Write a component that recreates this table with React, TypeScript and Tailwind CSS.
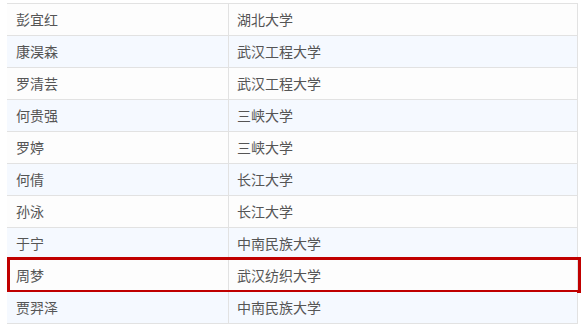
const rows: [string, string][] = [
  ['彭宜红', '湖北大学'],
  ['康淏森', '武汉工程大学'],
  ['罗清芸', '武汉工程大学'],
  ['何贵强', '三峡大学'],
  ['罗婷', '三峡大学'],
  ['何倩', '长江大学'],
  ['孙泳', '长江大学'],
  ['于宁', '中南民族大学'],
  ['周梦', '武汉纺织大学'],
  ['贾羿泽', '中南民族大学'],
]

// the row that gets the red frame
const marked = 8

export default function App() {
  return (
    <div className="h-[329px] w-[586px] overflow-hidden bg-white pl-[7px] pt-[3px] font-['Noto_Sans_CJK_SC',sans-serif] text-[14px] text-[#555]">
      <div className="w-[571px] border-r border-t border-[#e2e2e2]">
        {rows.map(([name, school], i) => (
          <div
            key={name}
            className={
              'relative grid h-[32px] grid-cols-[222px_1fr] border-b border-[#e2e2e2] ' +
              (i % 2 === 0 ? 'bg-[#fdfdfd]' : 'bg-[#f5f9ff]')
            }
          >
            <div className="flex items-center border-r border-[#e2e2e2] pl-[9px]">{name}</div>
            <div className="flex items-center pl-[8px]">{school}</div>
            {i === marked ? (
              <div className="pointer-events-none absolute -bottom-[2px] left-0 -right-[4px] -top-[3px] border-[3px] border-[#c00000]" />
            ) : null}
          </div>
        ))}
      </div>
    </div>
  )
}
